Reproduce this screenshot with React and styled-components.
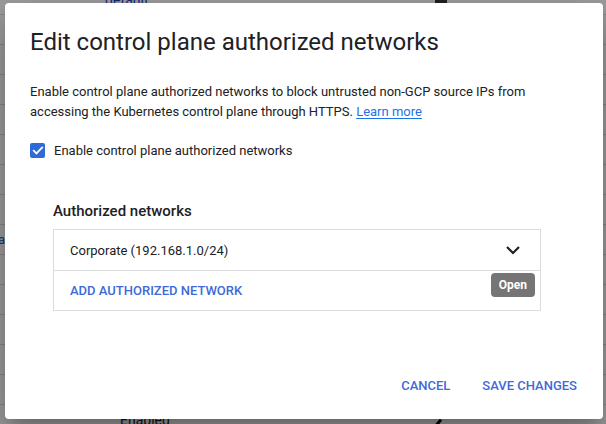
import React from "react";
import styled, { createGlobalStyle } from "styled-components";

const GlobalStyle = createGlobalStyle`
  * { box-sizing: border-box; }
  body {
    margin: 0;
    font-family: Roboto, "Liberation Sans", Arial, sans-serif;
    background: #fff;
  }
`;

const rows = Array.from({ length: 15 }, (_, i) => i);

const App = () => {
  return (
    <>
      <GlobalStyle />
      <Page>
        <BgTable>
          {rows.map((i) => (
            <BgRow key={i}>
              <BgLeft>{i === 8 ? "data" : ""}</BgLeft>
              <BgName $link={i === 0} $indent={i === 14 ? 115 : 100}>
                {i === 0 ? "default" : i === 14 ? "Enabled" : ""}
              </BgName>
              <BgIcon>
                {i === 0 && <DarkChip />}
                {i === 14 && <Slash />}
              </BgIcon>
            </BgRow>
          ))}
        </BgTable>

        <Scrim>
          <Dialog>
            <Title>Edit control plane authorized networks</Title>
            <Description>
              Enable control plane authorized networks to block untrusted
              non-GCP source IPs from accessing the Kubernetes control plane
              through HTTPS. <Link href="#">Learn more</Link>
            </Description>

            <CheckRow>
              <Checkbox>
                <svg width="12" height="10" viewBox="0 0 12 10">
                  <path
                    d="M1.2 5.2l3.2 3.2L10.8 1.8"
                    fill="none"
                    stroke="#fff"
                    strokeWidth="1.8"
                  />
                </svg>
              </Checkbox>
              <span>Enable control plane authorized networks</span>
            </CheckRow>

            <Section>
              <SectionTitle>Authorized networks</SectionTitle>
              <NetBox>
                <NetRow>
                  <span>Corporate (192.168.1.0/24)</span>
                  <svg width="16" height="10" viewBox="0 0 16 10">
                    <path
                      d="M2 2l6 6 6-6"
                      fill="none"
                      stroke="#202124"
                      strokeWidth="2.2"
                    />
                  </svg>
                </NetRow>
                <NetRow>
                  <TextButton $pad="0">ADD AUTHORIZED NETWORK</TextButton>
                </NetRow>
                <Tooltip>Open</Tooltip>
              </NetBox>
            </Section>

            <Actions>
              <TextButton>CANCEL</TextButton>
              <TextButton>SAVE CHANGES</TextButton>
            </Actions>
          </Dialog>
        </Scrim>
      </Page>
    </>
  );
};

export default App;

const Page = styled.div`
  position: relative;
  width: 606px;
  height: 424px;
  overflow: hidden;
  background: #fafafa;
`;

const BgTable = styled.div`
  margin-top: -15px;
  display: flex;
  flex-direction: column;
`;

const BgRow = styled.div`
  height: 30px;
  display: grid;
  grid-template-columns: 5px 320px 1fr;
  align-items: center;
  border-bottom: 1px solid #d8d8d8;
  font-size: 13px;
  color: #202124;
`;

const BgLeft = styled.div`
  direction: rtl;
  overflow: hidden;
  white-space: nowrap;
  color: #1a5fb4;
`;

const BgName = styled.div`
  padding-left: ${(p) => p.$indent}px;
  color: ${(p) => (p.$link ? "#1a3fc8" : "#202124")};
  font-size: 14px;
`;

const BgIcon = styled.div`
  padding-left: 110px;
  display: flex;
  align-items: center;
`;

const DarkChip = styled.div`
  width: 12px;
  height: 12px;
  border-radius: 2px;
  background: #333;
`;

const Slash = styled.div`
  width: 3px;
  height: 14px;
  background: #000;
  transform: rotate(40deg);
  margin-top: 10px;
`;

const Scrim = styled.div`
  position: absolute;
  inset: 0;
  background: rgba(0, 0, 0, 0.37);
  padding: 3px 3px 5px 5px;
  display: flex;
`;

const Dialog = styled.div`
  width: 598px;
  height: 416px;
  background: #fff;
  border-radius: 4px;
  box-shadow: 0 11px 15px -7px rgba(0, 0, 0, 0.2),
    0 24px 38px 3px rgba(0, 0, 0, 0.14), 0 9px 46px 8px rgba(0, 0, 0, 0.12);
  padding: 23px 18px 16px 25px;
  display: flex;
  flex-direction: column;
`;

const Title = styled.h2`
  margin: 0;
  font-size: 24px;
  line-height: 32px;
  font-weight: 400;
  color: #202124;
`;

const Description = styled.p`
  margin: 24px 0 0;
  font-size: 13px;
  line-height: 20px;
  color: #202124;
  max-width: 520px;
`;

const Link = styled.a`
  color: #1a73e8;
  text-decoration: underline;
  text-underline-offset: 2px;
`;

const CheckRow = styled.div`
  margin-top: 18px;
  display: flex;
  align-items: center;
  gap: 9px;
  height: 20px;
  font-size: 13px;
  color: #202124;
`;

const Checkbox = styled.div`
  width: 15px;
  height: 15px;
  border-radius: 2px;
  background: #2f6ad9;
  display: flex;
  align-items: center;
  justify-content: center;
`;

const Section = styled.div`
  margin: 39px 0 0 23px;
  width: 488px;
`;

const SectionTitle = styled.div`
  font-size: 15px;
  line-height: 24px;
  font-weight: 500;
  color: #202124;
`;

const NetBox = styled.div`
  position: relative;
  margin-top: 6px;
  border: 1px solid #dadce0;
`;

const NetRow = styled.div`
  height: 40px;
  display: flex;
  align-items: center;
  justify-content: space-between;
  padding: 0 19px 0 16px;
  font-size: 13px;
  color: #202124;

  & + & {
    border-top: 1px solid #dadce0;
  }
`;

const TextButton = styled.button`
  border: none;
  background: none;
  padding: ${(p) => p.$pad ?? "0 8px"};
  height: 36px;
  font-family: Roboto, "Liberation Sans", Arial, sans-serif;
  font-size: 13px;
  font-weight: 500;
  color: #3e6ad8;
  cursor: pointer;
`;

const Tooltip = styled.div`
  position: absolute;
  right: 5px;
  top: 43px;
  height: 24px;
  padding: 0 8px;
  display: flex;
  align-items: center;
  border-radius: 4px;
  background: #757575;
  color: #fff;
  font-size: 12px;
  font-weight: 700;
`;

const Actions = styled.div`
  margin-top: auto;
  display: flex;
  justify-content: flex-end;
  gap: 16px;
`;
